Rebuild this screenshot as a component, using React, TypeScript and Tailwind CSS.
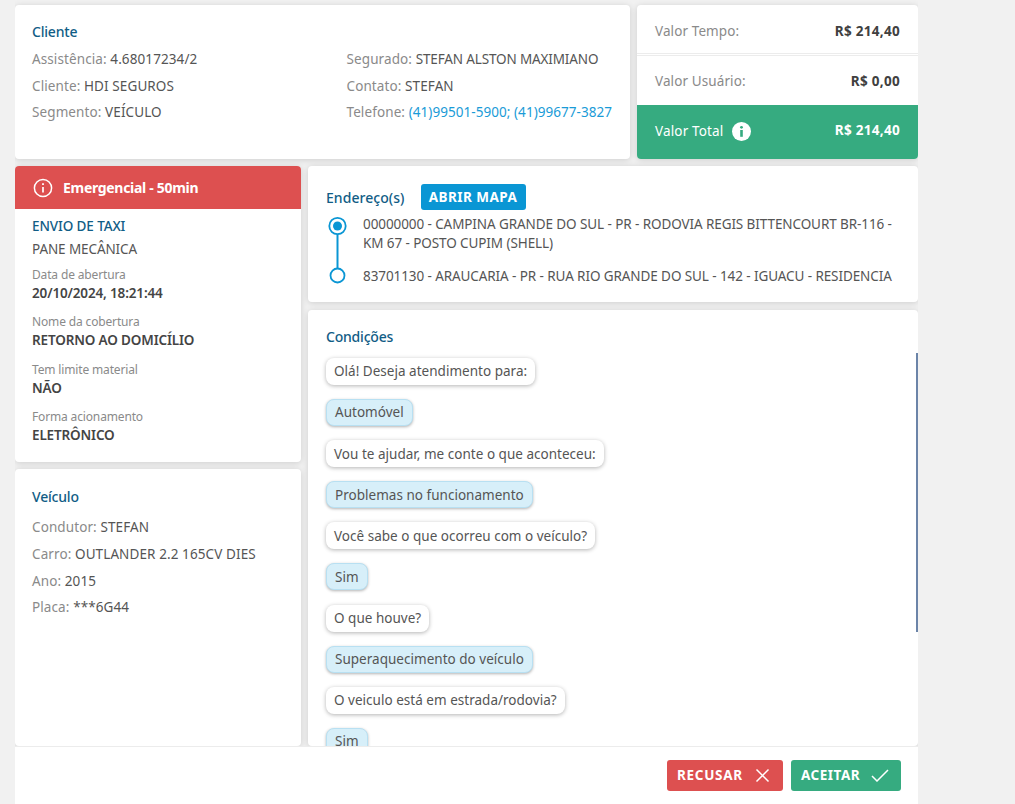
import React from "react";

function Line({ k, v, link, tight }: { k: string; v: string; link?: boolean; tight?: boolean }) {
  return (
    <p className="text-[13.5px] leading-[18px] text-[#8a8a8a] whitespace-nowrap tracking-[0.1px]">
      {k}{" "}
      <span
        className={
          link
            ? "text-[#1a9bd7] tracking-[0.05px]"
            : tight
              ? "text-[#555555] tracking-[-0.14px]"
              : "text-[#555555]"
        }
      >
        {v}
      </span>
    </p>
  );
}

function Info({ k, v }: { k: string; v: string }) {
  return (
    <div>
      <p className="text-[12px] leading-[16px] text-[#8a8a8a] tracking-[-0.15px]">{k}</p>
      <p className="mt-[1px] text-[13.5px] leading-[18px] font-semibold text-[#444444] tracking-[-0.15px]">{v}</p>
    </div>
  );
}

const card = "bg-white rounded-[4px] shadow-[0_1px_6px_rgba(0,0,0,0.15)]";

function Bubble({ t, me }: { t: string; me?: boolean }) {
  return (
    <div
      className={
        "self-start h-[27px] px-[8px] flex items-center rounded-[8px] text-[13.5px] tracking-[0.02px] text-[#555555] whitespace-nowrap " +
        (me
          ? "bg-[#d7eff9] border border-[#b8e0f2] shadow-[0_1px_3px_rgba(0,0,0,0.3)]"
          : "bg-white shadow-[0_1px_4px_rgba(0,0,0,0.3)]")
      }
    >
      {t}
    </div>
  );
}

export default function App() {
  return (
    <div className="h-screen overflow-hidden bg-[#f1f1f1] pl-[15px] flex flex-col font-['Noto_Sans',sans-serif]">
      <div className="w-[903px] flex-1 min-h-0 overflow-hidden pt-[5px] flex flex-col gap-[7px]">
        <div className="flex gap-[7px] shrink-0">
          <section className={card + " w-[615px] h-[154px] pl-[17px] pt-[18px]"}>
            <h2 className="text-[14px] leading-[18px] font-medium text-[#115d86] tracking-[-0.2px]">Cliente</h2>
            <div className="mt-[9px] grid grid-cols-[314.5px_1fr]">
              <div className="flex flex-col gap-[8.5px]">
                <Line k="Assistência:" v="4.68017234/2" />
                <Line k="Cliente:" v="HDI SEGUROS" />
                <Line k="Segmento:" v="VEÍCULO" />
              </div>
              <div className="flex flex-col gap-[8.5px]">
                <Line k="Segurado:" v="STEFAN ALSTON MAXIMIANO" tight />
                <Line k="Contato:" v="STEFAN" />
                <Line k="Telefone:" v="(41)99501-5900; (41)99677-3827" link />
              </div>
            </div>
          </section>
          <section className={card + " w-[281px] h-[154px] overflow-hidden flex flex-col"}>
            <div className="h-[49px] pt-[4px] px-[18px] flex items-center justify-between border-b border-[#ececec]">
              <span className="text-[13.5px] text-[#8a8a8a] tracking-[0.1px]">Valor Tempo:</span>
              <span className="text-[13.5px] font-bold text-[#404040] tracking-[0.3px]">R$ 214,40</span>
            </div>
            <div className="h-[50px] pt-[1px] px-[18px] flex items-center justify-between border-t border-[#ececec] mt-[1px]">
              <span className="text-[13.5px] text-[#8a8a8a] tracking-[0.1px]">Valor Usuário:</span>
              <span className="text-[13.5px] font-bold text-[#404040] tracking-[0.3px]">R$ 0,00</span>
            </div>
            <div className="flex-1 px-[18px] pb-[2px] bg-[#36ab80] flex items-center justify-between text-white">
              <span className="flex items-center gap-[9px] text-[13.5px] tracking-[0.15px]">
                Valor Total
                <svg width="19" height="19" viewBox="0 0 19 19">
                  <circle cx="9.5" cy="9.5" r="9.5" fill="#fff" />
                  <circle cx="9.5" cy="5.3" r="1.4" fill="#36ab80" />
                  <rect x="8.2" y="8" width="2.6" height="6.8" fill="#36ab80" />
                </svg>
              </span>
              <span className="text-[13.5px] font-bold -mt-[1px] tracking-[0.3px]">R$ 214,40</span>
            </div>
          </section>
        </div>

        <div className="flex gap-[7px] flex-1 min-h-0">
          <div className="w-[286px] shrink-0 flex flex-col gap-[7px]">
            <section className={card + " h-[296px] overflow-hidden shrink-0"}>
              <div className="h-[43px] bg-[#dd5050] pl-[18px] flex items-center gap-[10px] text-white">
                <svg width="20" height="20" viewBox="0 0 20 20" fill="none" stroke="#fff" strokeWidth="1.5">
                  <circle cx="10" cy="10" r="8.6" />
                  <path d="M10 9v5.5" strokeWidth="1.7" />
                  <path d="M10 5.2v1.9" strokeWidth="1.8" />
                </svg>
                <span className="text-[14px] font-bold tracking-[-0.3px]">Emergencial - 50min</span>
              </div>
              <div className="pl-[17px] pt-[8px]">
                <p className="text-[13.5px] leading-[18px] font-medium text-[#115d86] tracking-[-0.1px]">ENVIO DE TAXI</p>
                <p className="text-[13.5px] leading-[18px] mt-[5px] text-[#555555] tracking-[-0.1px]">PANE MECÂNICA</p>
                <div className="mt-[9px] flex flex-col gap-[12.3px]">
                  <Info k="Data de abertura" v="20/10/2024, 18:21:44" />
                  <Info k="Nome da cobertura" v="RETORNO AO DOMICÍLIO" />
                  <Info k="Tem limite material" v="NÃO" />
                  <Info k="Forma acionamento" v="ELETRÔNICO" />
                </div>
              </div>
            </section>
            <section className={card + " flex-1 pl-[17px] pt-[19px]"}>
              <h2 className="text-[14px] leading-[18px] font-medium text-[#115d86] tracking-[-0.2px]">Veículo</h2>
              <div className="mt-[12px] flex flex-col gap-[8.8px]">
                <Line k="Condutor:" v="STEFAN" />
                <Line k="Carro:" v="OUTLANDER 2.2 165CV DIES" />
                <Line k="Ano:" v="2015" />
                <Line k="Placa:" v="***6G44" />
              </div>
            </section>
          </div>

          <div className="flex-1 flex flex-col gap-[8px] min-w-0">
            <section className={card + " h-[136px] shrink-0 pl-[18px] pt-[18px]"}>
              <div className="flex items-center gap-[16px]">
                <h2 className="text-[14px] font-medium text-[#115d86] tracking-[0.05px]">Endereço(s)</h2>
                <span className="h-[26px] w-[105px] justify-center rounded-[3px] bg-[#0a96d4] text-white text-[13.5px] font-bold flex items-center tracking-[0.45px]">ABRIR MAPA</span>
              </div>
              <div className="flex mt-[5px]">
                <svg width="22" height="70" viewBox="0 0 22 70" fill="none" className="shrink-0 mt-[1px]">
                  <path d="M11.5 18v36" stroke="#0a96d4" strokeWidth="2" />
                  <circle cx="11.5" cy="10" r="8.2" stroke="#0a96d4" strokeWidth="1.8" fill="#fff" />
                  <circle cx="11.5" cy="10" r="4.5" fill="#0a96d4" />
                  <circle cx="11.5" cy="59.5" r="7" stroke="#0a96d4" strokeWidth="1.8" fill="#fff" />
                </svg>
                <div className="ml-[15px] pr-[18px] text-[13.5px] leading-[19px] text-[#555555] tracking-[-0.09px]">
                  <p>00000000 - CAMPINA GRANDE DO SUL - PR - RODOVIA REGIS BITTENCOURT BR-116 - KM 67 - POSTO CUPIM (SHELL)</p>
                  <p className="mt-[14px] whitespace-nowrap">83701130 - ARAUCARIA - PR - RUA RIO GRANDE DO SUL - 142 - IGUACU - RESIDENCIA</p>
                </div>
              </div>
            </section>
            <section className={card + " relative flex-1 min-h-0 overflow-hidden pl-[18px] pt-[18px]"}>
              <h2 className="text-[14px] leading-[18px] font-medium text-[#115d86] tracking-[-0.2px]">Condições</h2>
              <div className="mt-[10px] flex flex-col gap-[14.1px] pt-[2px] pb-[2px]">
                <Bubble t="Olá! Deseja atendimento para:" />
                <Bubble t="Automóvel" me />
                <Bubble t="Vou te ajudar, me conte o que aconteceu:" />
                <Bubble t="Problemas no funcionamento" me />
                <Bubble t="Você sabe o que ocorreu com o veículo?" />
                <Bubble t="Sim" me />
                <Bubble t="O que houve?" />
                <Bubble t="Superaquecimento do veículo" me />
                <Bubble t="O veiculo está em estrada/rodovia?" />
                <Bubble t="Sim" me />
              </div>
              <div className="absolute right-0 top-[43px] w-[2px] h-[279px] bg-[#6b84a8]" />
            </section>
          </div>
        </div>
      </div>

      <footer className="w-[903px] h-[58px] shrink-0 bg-white border-t border-[#ececec] flex items-center justify-end gap-[8px] pr-[17px] relative">
        <button className="h-[31px] w-[116px] rounded-[3px] bg-[#dd5050] text-white text-[13.5px] font-bold flex items-center justify-between pl-[10px] pr-[13px] tracking-[0.7px]">
          RECUSAR
          <svg width="15" height="15" viewBox="0 0 15 15" stroke="#fff" strokeWidth="1.5" fill="none"><path d="M1.5 1.5l12 12M13.5 1.5l-12 12" /></svg>
        </button>
        <button className="h-[31px] w-[110px] rounded-[3px] bg-[#36ab80] text-white text-[13.5px] font-bold flex items-center justify-between pl-[10px] pr-[12px] tracking-[0.5px]">
          ACEITAR
          <svg width="18" height="13" viewBox="0 0 18 13" stroke="#fff" strokeWidth="1.5" fill="none"><path d="M1 7l5 5L17 1" /></svg>
        </button>
      </footer>
    </div>
  );
}
